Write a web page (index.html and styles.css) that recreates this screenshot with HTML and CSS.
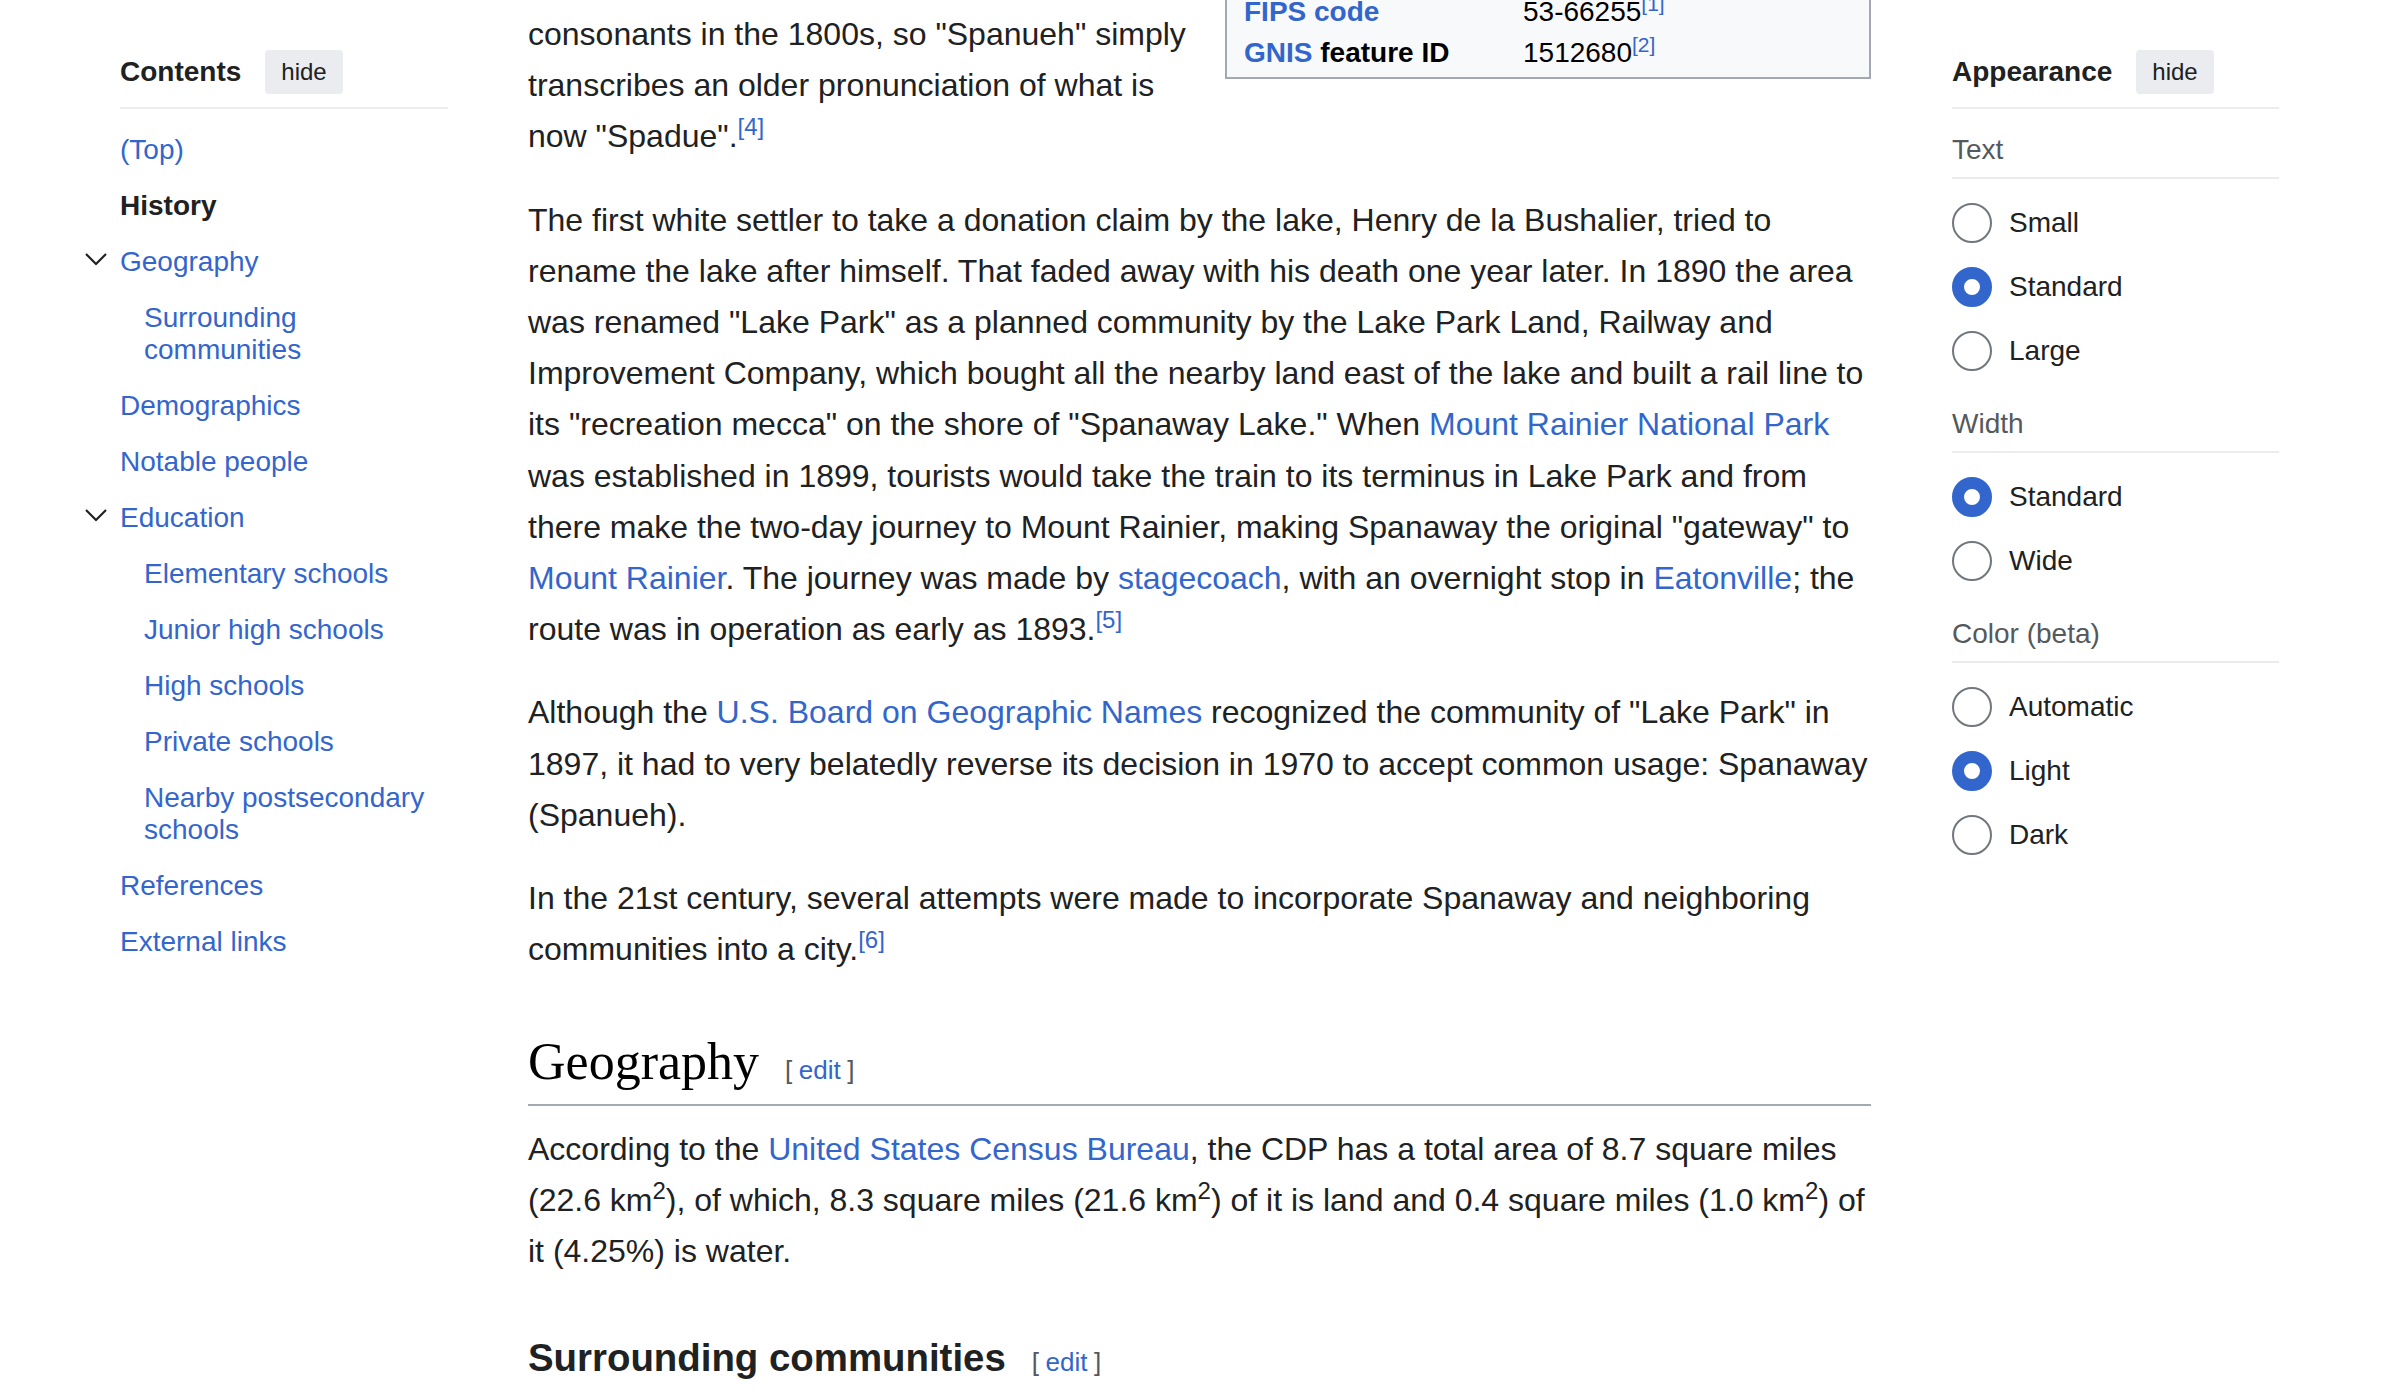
FILE: index.html
```html
<!DOCTYPE html>
<html lang="en">
<head>
<meta charset="utf-8">
<title>Spanaway, Washington</title>
<link rel="stylesheet" href="styles.css">
</head>
<body>
<div class="page">
  <nav class="toc">
    <div class="panel-head">
      <h2 class="panel-title">Contents</h2>
      <button class="hide-btn" type="button">hide</button>
    </div>
    <ul class="toc-list">
      <li class="toc-item"><a href="#">(Top)</a></li>
      <li class="toc-item active"><a href="#">History</a></li>
      <li class="toc-item">
        <span class="toggle"><svg width="24" height="24" viewBox="0 0 24 24"><path d="M2 7l10 10 10-10" fill="none" stroke="#202122" stroke-width="2.2"/></svg></span>
        <a href="#">Geography</a>
        <ul class="toc-sub">
          <li class="toc-item"><a href="#">Surrounding communities</a></li>
        </ul>
      </li>
      <li class="toc-item"><a href="#">Demographics</a></li>
      <li class="toc-item"><a href="#">Notable people</a></li>
      <li class="toc-item">
        <span class="toggle"><svg width="24" height="24" viewBox="0 0 24 24"><path d="M2 7l10 10 10-10" fill="none" stroke="#202122" stroke-width="2.2"/></svg></span>
        <a href="#">Education</a>
        <ul class="toc-sub">
          <li class="toc-item"><a href="#">Elementary schools</a></li>
          <li class="toc-item"><a href="#">Junior high schools</a></li>
          <li class="toc-item"><a href="#">High schools</a></li>
          <li class="toc-item"><a href="#">Private schools</a></li>
          <li class="toc-item"><a href="#">Nearby postsecondary schools</a></li>
        </ul>
      </li>
      <li class="toc-item"><a href="#">References</a></li>
      <li class="toc-item"><a href="#">External links</a></li>
    </ul>
  </nav>

  <main class="content">
    <div class="infobox">
      <div class="ib-row">
        <div class="ib-label"><a href="#">FIPS code</a></div>
        <div class="ib-data">53-66255<sup class="ref"><a href="#">[1]</a></sup></div>
      </div>
      <div class="ib-row">
        <div class="ib-label"><a href="#">GNIS</a> feature ID</div>
        <div class="ib-data">1512680<sup class="ref"><a href="#">[2]</a></sup></div>
      </div>
    </div>

    <p class="first">consonants in the 1800s, so "Spanueh" simply transcribes an older pronunciation of what is now "Spadue".<sup class="ref"><a href="#">[4]</a></sup></p>

    <p>The first white settler to take a donation claim by the lake, Henry de la Bushalier, tried to rename the lake after himself. That faded away with his death one year later. In 1890 the area was renamed "Lake Park" as a planned community by the Lake Park Land, Railway and Improvement Company, which bought all the nearby land east of the lake and built a rail line to its "recreation mecca" on the shore of "Spanaway Lake." When <a href="#">Mount Rainier National Park</a> was established in 1899, tourists would take the train to its terminus in Lake Park and from there make the two-day journey to Mount Rainier, making Spanaway the original "gateway" to <a href="#">Mount Rainier</a>. The journey was made by <a href="#">stagecoach</a>, with an overnight stop in <a href="#">Eatonville</a>; the route was in operation as early as 1893.<sup class="ref"><a href="#">[5]</a></sup></p>

    <p>Although the <a href="#">U.S. Board on Geographic Names</a> recognized the community of "Lake Park" in 1897, it had to very belatedly reverse its decision in 1970 to accept common usage: Spanaway (Spanueh).</p>

    <p>In the 21st century, several attempts were made to incorporate Spanaway and neighboring communities into a city.<sup class="ref"><a href="#">[6]</a></sup></p>

    <h2 class="section-h2">Geography<span class="editsection"><span class="bracket">[</span><a href="#">edit</a><span class="bracket">]</span></span></h2>

    <p class="after-h2">According to the <a href="#">United States Census Bureau</a>, the CDP has a total area of 8.7 square miles (22.6 km<sup>2</sup>), of which, 8.3 square miles (21.6 km<sup>2</sup>) of it is land and 0.4 square miles (1.0 km<sup>2</sup>) of it (4.25%) is water.</p>

    <h3 class="section-h3">Surrounding communities<span class="editsection"><span class="bracket">[</span><a href="#">edit</a><span class="bracket">]</span></span></h3>
  </main>

  <aside class="appearance">
    <div class="panel-head">
      <h2 class="panel-title">Appearance</h2>
      <button class="hide-btn" type="button">hide</button>
    </div>

    <div class="group">
      <div class="group-label">Text</div>
      <label class="radio-row"><input type="radio" name="text"><span>Small</span></label>
      <label class="radio-row"><input type="radio" name="text" checked><span>Standard</span></label>
      <label class="radio-row"><input type="radio" name="text"><span>Large</span></label>
    </div>

    <div class="group">
      <div class="group-label">Width</div>
      <label class="radio-row"><input type="radio" name="width" checked><span>Standard</span></label>
      <label class="radio-row"><input type="radio" name="width"><span>Wide</span></label>
    </div>

    <div class="group">
      <div class="group-label">Color (beta)</div>
      <label class="radio-row"><input type="radio" name="color"><span>Automatic</span></label>
      <label class="radio-row"><input type="radio" name="color" checked><span>Light</span></label>
      <label class="radio-row"><input type="radio" name="color"><span>Dark</span></label>
    </div>
  </aside>
</div>
</body>
</html>
```

FILE: styles.css
```css
html, body {
  margin: 0;
  padding: 0;
  background: #ffffff;
}

body {
  font-family: "Liberation Sans", Arial, sans-serif;
  color: #202122;
  overflow: hidden;
}

a {
  color: #3366cc;
  text-decoration: none;
}

.page {
  display: grid;
  grid-template-columns: 328px 1343px 328px;
  column-gap: 80px;
  padding-left: 120px;
  align-items: start;
}

/* ---------- side panels ---------- */
.toc,
.appearance {
  padding-top: 50px;
  font-size: 28px;
  line-height: 32px;
}

.appearance {
  margin-left: 1px;
}

.panel-head {
  display: flex;
  align-items: center;
  gap: 24px;
  height: 44px;
  padding-bottom: 13px;
  border-bottom: 2px solid #eaecf0;
}

.panel-title {
  margin: 0;
  font-size: 28px;
  line-height: 32px;
  font-weight: bold;
  color: #202122;
}

.hide-btn {
  height: 44px;
  padding: 0 16px;
  border: none;
  border-radius: 4px;
  background: #eaecf0;
  color: #202122;
  font-family: "Liberation Sans", Arial, sans-serif;
  font-size: 24px;
  line-height: 44px;
}

/* ---------- table of contents ---------- */
.toc-list,
.toc-sub {
  list-style: none;
  margin: 0;
  padding: 0;
}

.toc-list {
  margin-top: 13px;
}

.toc-sub {
  padding-left: 24px;
}

.toc-item {
  position: relative;
}

.toc-item > a {
  display: block;
  padding: 12px 0;
  line-height: 32px;
}

.toc-item.active > a {
  color: #202122;
  font-weight: bold;
}

.toggle {
  position: absolute;
  left: -36px;
  top: 13px;
  width: 24px;
  height: 24px;
  display: block;
}

.toggle svg {
  display: block;
}

/* ---------- appearance ---------- */
.group {
  margin-top: 25px;
}

.group-label {
  color: #54595d;
  line-height: 32px;
  padding-bottom: 11px;
  border-bottom: 2px solid #eaecf0;
  margin-bottom: 12px;
}

.radio-row {
  display: flex;
  align-items: center;
  gap: 17px;
  height: 64px;
  color: #202122;
}

.radio-row input {
  appearance: none;
  -webkit-appearance: none;
  box-sizing: border-box;
  width: 40px;
  height: 40px;
  margin: 0;
  border: 2px solid #72777d;
  border-radius: 50%;
  background: #ffffff;
  flex: none;
}

.radio-row input:checked {
  border: 12px solid #3366cc;
}

/* ---------- main content ---------- */
.content {
  padding-top: 9px;
  font-size: 32px;
  line-height: 51.2px;
  color: #202122;
}

.content p {
  margin: 16px 0 32px;
}

.content p.first {
  margin-top: 0;
}

.content p.after-h2 {
  margin-top: 18px;
}

sup {
  font-size: 0.75em;
  line-height: 1;
  vertical-align: super;
}

.infobox {
  float: right;
  box-sizing: border-box;
  width: 646px;
  margin: -20px 0 16px 28px;
  padding: 0 8px 4px 17px;
  background: #f8f9fa;
  border: 2px solid #a2a9b1;
  font-size: 28px;
  line-height: 41px;
  color: #202122;
}

.ib-row {
  display: grid;
  grid-template-columns: 279px 1fr;
}

.ib-label {
  font-weight: bold;
  color: #000000;
}

.ib-data {
  color: #000000;
}

.section-h2 {
  margin: 55px 0 0;
  padding-bottom: 1.5px;
  border-bottom: 2px solid #a2a9b1;
  font-family: "Liberation Serif", "Times New Roman", serif;
  font-weight: normal;
  font-size: 52px;
  line-height: 64px;
  color: #000000;
}

.section-h3 {
  margin: 11.5px 0 0;
  padding-top: 17px;
  font-size: 38.4px;
  line-height: 61.44px;
  font-weight: bold;
  color: #202122;
}

.editsection {
  margin-left: 26px;
  font-family: "Liberation Sans", Arial, sans-serif;
  font-size: 26px;
  font-weight: normal;
  color: #54595d;
}

.editsection .bracket:first-child {
  margin-right: 6.5px;
}

.editsection .bracket:last-child {
  margin-left: 6.5px;
}
```
